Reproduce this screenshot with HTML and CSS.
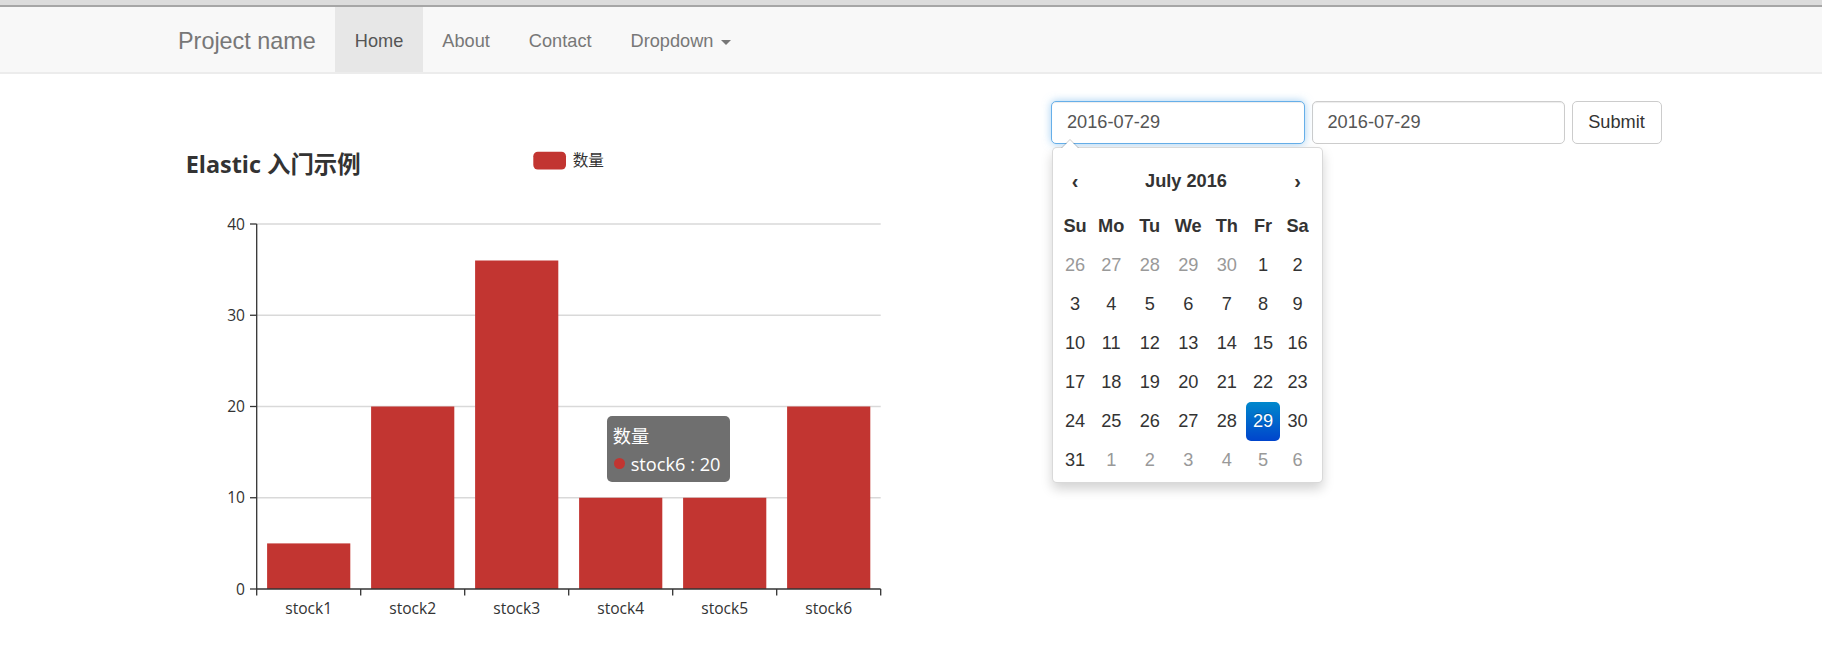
FILE: index.html
```html
<!DOCTYPE html>
<html lang="zh-CN">
<head>
<meta charset="utf-8">
<title>Project name</title>
<link rel="stylesheet" href="styles.css">
</head>
<body>
<div class="topstrip"></div>
<nav class="navbar">
  <div class="nav-inner">
    <a class="brand" href="#">Project name</a>
    <ul class="nav">
      <li class="active"><a href="#">Home</a></li>
      <li><a href="#">About</a></li>
      <li><a href="#">Contact</a></li>
      <li><a href="#">Dropdown <span class="caret"></span></a></li>
    </ul>
  </div>
</nav>
<main class="main">
  <section class="chart">
    <svg class="chart-svg" width="750" height="540" viewBox="0 0 750 540" xmlns="http://www.w3.org/2000/svg">
      <text class="c-title" x="35.7" y="71.5">Elastic 入门示例</text>
      <rect x="383.3" y="50.7" width="32.7" height="17.8" rx="4.5" fill="#c23531"/>
      <text class="c-legend" x="422.7" y="65">数量</text>

      <g stroke="#d9d9d9" stroke-width="1.3">
        <line x1="106.7" y1="123" x2="730.7" y2="123"/>
        <line x1="106.7" y1="214.25" x2="730.7" y2="214.25"/>
        <line x1="106.7" y1="305.5" x2="730.7" y2="305.5"/>
        <line x1="106.7" y1="396.75" x2="730.7" y2="396.75"/>
      </g>

      <g fill="#c23531">
        <rect x="117.1" y="442.4" width="83.2" height="45.6"/>
        <rect x="221.1" y="305.5" width="83.2" height="182.5"/>
        <rect x="325.1" y="159.5" width="83.2" height="328.5"/>
        <rect x="429.1" y="396.75" width="83.2" height="91.25"/>
        <rect x="533.1" y="396.75" width="83.2" height="91.25"/>
        <rect x="637.1" y="305.5" width="83.2" height="182.5"/>
      </g>

      <g stroke="#333" stroke-width="1.3">
        <line x1="106.7" y1="123" x2="106.7" y2="488"/>
        <line x1="106.7" y1="488" x2="730.7" y2="488"/>
        <line x1="100" y1="123" x2="106.7" y2="123"/>
        <line x1="100" y1="214.25" x2="106.7" y2="214.25"/>
        <line x1="100" y1="305.5" x2="106.7" y2="305.5"/>
        <line x1="100" y1="396.75" x2="106.7" y2="396.75"/>
        <line x1="100" y1="488" x2="106.7" y2="488"/>
        <line x1="106.7" y1="488" x2="106.7" y2="494.5"/>
        <line x1="210.7" y1="488" x2="210.7" y2="494.5"/>
        <line x1="314.7" y1="488" x2="314.7" y2="494.5"/>
        <line x1="418.7" y1="488" x2="418.7" y2="494.5"/>
        <line x1="522.7" y1="488" x2="522.7" y2="494.5"/>
        <line x1="626.7" y1="488" x2="626.7" y2="494.5"/>
        <line x1="730.7" y1="488" x2="730.7" y2="494.5"/>
      </g>

      <g class="c-label" text-anchor="end">
        <text x="95" y="128.5">40</text>
        <text x="95" y="219.75">30</text>
        <text x="95" y="311">20</text>
        <text x="95" y="402.25">10</text>
        <text x="95" y="493.5">0</text>
      </g>
      <g class="c-label" text-anchor="middle">
        <text x="158.7" y="513">stock1</text>
        <text x="262.7" y="513">stock2</text>
        <text x="366.7" y="513">stock3</text>
        <text x="470.7" y="513">stock4</text>
        <text x="574.7" y="513">stock5</text>
        <text x="678.7" y="513">stock6</text>
      </g>
    </svg>
    <div class="tooltip">
      <div class="tip-title">数量</div>
      <div class="tip-row"><span class="tip-dot"></span>stock6 : 20</div>
    </div>
  </section>

  <section class="form-area">
    <form class="form-inline">
      <div class="field">
        <input class="input is-focus" type="text" value="2016-07-29">
        <div class="datepicker">
          <table class="dp-table">
            <colgroup>
              <col class="c-su"><col class="c-mid"><col class="c-mid"><col class="c-mid"><col class="c-mid"><col class="c-fr"><col class="c-sa">
            </colgroup>
            <thead>
              <tr class="dp-head">
                <th class="dp-nav">‹</th>
                <th colspan="5" class="dp-switch">July 2016</th>
                <th class="dp-nav">›</th>
              </tr>
              <tr class="dp-dow">
                <th>Su</th><th>Mo</th><th>Tu</th><th>We</th><th>Th</th><th>Fr</th><th>Sa</th>
              </tr>
            </thead>
            <tbody>
              <tr><td class="old">26</td><td class="old">27</td><td class="old">28</td><td class="old">29</td><td class="old">30</td><td>1</td><td>2</td></tr>
              <tr><td>3</td><td>4</td><td>5</td><td>6</td><td>7</td><td>8</td><td>9</td></tr>
              <tr><td>10</td><td>11</td><td>12</td><td>13</td><td>14</td><td>15</td><td>16</td></tr>
              <tr><td>17</td><td>18</td><td>19</td><td>20</td><td>21</td><td>22</td><td>23</td></tr>
              <tr><td>24</td><td>25</td><td>26</td><td>27</td><td>28</td><td class="active">29</td><td>30</td></tr>
              <tr><td>31</td><td class="old">1</td><td class="old">2</td><td class="old">3</td><td class="old">4</td><td class="old">5</td><td class="old">6</td></tr>
            </tbody>
          </table>
        </div>
      </div>
      <input class="input input-2" type="text" value="2016-07-29">
      <button class="btn" type="button">Submit</button>
    </form>
  </section>
</main>
</body>
</html>
```

FILE: styles.css
```css
html, body {
  margin: 0;
  padding: 0;
  background: #fff;
}

body {
  font-family: "Liberation Sans", Arial, sans-serif;
  color: #333;
  width: 1822px;
  height: 663px;
  overflow: hidden;
}

a {
  text-decoration: none;
}

.topstrip {
  height: 5px;
  background: #dcdcdc;
  border-bottom: 2px solid #a6a6a6;
}

.navbar {
  height: 65px;
  background: #f8f8f8;
  border-bottom: 2px solid #ececec;
}

.nav-inner {
  display: flex;
  height: 100%;
  padding-left: 158.5px;
}

.brand {
  display: block;
  padding: 3px 19.5px 0;
  font-size: 23.4px;
  line-height: 62px;
  color: #777;
}

.nav {
  display: flex;
  list-style: none;
  margin: 0;
  padding: 0;
}

.nav a {
  display: block;
  padding: 3px 19.5px 0;
  line-height: 62px;
  font-size: 18.2px;
  color: #777;
}

.nav .active a {
  background: #e7e7e7;
  color: #555;
}

.caret {
  display: inline-block;
  width: 0;
  height: 0;
  margin-left: 2px;
  vertical-align: middle;
  border-top: 5px solid #777;
  border-left: 5px solid transparent;
  border-right: 5px solid transparent;
}

.main {
  display: flex;
  padding-top: 27px;
}

.chart {
  position: relative;
  flex: none;
  margin-left: 150px;
  width: 901px;
  height: 540px;
}

.chart-svg {
  display: block;
  font-family: "Open Sans", "Noto Sans CJK SC", sans-serif;
}

.c-title {
  font-size: 23.4px;
  font-weight: bold;
  fill: #333;
}

.c-legend {
  font-size: 15.6px;
  fill: #333;
}

.c-label text {
  font-size: 15.6px;
  fill: #333;
}

.tooltip {
  position: absolute;
  left: 456.7px;
  top: 314.7px;
  width: 123.3px;
  box-sizing: border-box;
  padding: 6px 6px 4px 6px;
  background: rgba(50, 50, 50, 0.7);
  border-radius: 5px;
  color: #fff;
  font-family: "Open Sans", "Noto Sans CJK SC", sans-serif;
  font-size: 18.2px;
  line-height: 28px;
  white-space: nowrap;
}

.tip-row {
  display: flex;
  align-items: center;
}

.tip-dot {
  display: inline-block;
  width: 11px;
  height: 11px;
  border-radius: 50%;
  background: #c23531;
  margin-right: 6px;
  margin-left: 1px;
}

.form-area {
  flex: none;
}

.form-inline {
  display: flex;
  align-items: flex-start;
  gap: 6.5px;
  margin: 0;
}

.field {
  position: relative;
}

.input {
  display: block;
  box-sizing: border-box;
  width: 254px;
  height: 43px;
  margin: 0;
  padding: 0 15px;
  border: 1px solid #ccc;
  border-radius: 5px;
  background: #fff;
  font-family: "Liberation Sans", Arial, sans-serif;
  font-size: 18.2px;
  color: #555;
  box-shadow: inset 0 1px 1px rgba(0, 0, 0, 0.075);
  outline: none;
}

.input.is-focus {
  border-color: #66afe9;
  box-shadow: inset 0 1px 1px rgba(0, 0, 0, 0.075), 0 0 8px rgba(102, 175, 233, 0.6);
}

.input-2 {
  width: 253.5px;
}

.btn {
  box-sizing: border-box;
  width: 90px;
  height: 43px;
  margin: 0;
  padding: 0;
  border: 1px solid #ccc;
  border-radius: 5px;
  background: #fff;
  font-family: "Liberation Sans", Arial, sans-serif;
  font-size: 18.2px;
  color: #333;
}

.datepicker {
  position: absolute;
  top: 46px;
  left: 1px;
  z-index: 10;
  box-sizing: border-box;
  width: 271px;
  height: 336px;
  padding: 7px 5px 3px;
  background: #fff;
  border: 1px solid rgba(0, 0, 0, 0.15);
  border-radius: 5px;
  box-shadow: 0 6px 12px rgba(0, 0, 0, 0.175);
}

.datepicker::before {
  content: "";
  position: absolute;
  top: -9px;
  left: 8px;
  border-left: 9px solid transparent;
  border-right: 9px solid transparent;
  border-bottom: 9px solid rgba(0, 0, 0, 0.2);
}

.datepicker::after {
  content: "";
  position: absolute;
  top: -8px;
  left: 9px;
  border-left: 8px solid transparent;
  border-right: 8px solid transparent;
  border-bottom: 8px solid #fff;
}

.dp-table {
  table-layout: fixed;
  width: 257px;
  border-collapse: collapse;
  border-spacing: 0;
  font-size: 18.2px;
  color: #333;
}

.c-su { width: 34px; }
.c-mid { width: 38.5px; }
.c-fr { width: 34px; }
.c-sa { width: 35px; }

.dp-table th,
.dp-table td {
  padding: 0;
  height: 39px;
  text-align: center;
}

.dp-table th {
  font-weight: bold;
}

.dp-head th {
  height: 52px;
}

.dp-nav {
  font-size: 20px;
}

.dp-table td.old {
  color: #999;
}

.dp-table td.active {
  color: #fff;
  background: linear-gradient(to bottom, #0088cc, #0044cc);
  border-radius: 5px;
  text-shadow: 0 -1px 0 rgba(0, 0, 0, 0.25);
}
```
